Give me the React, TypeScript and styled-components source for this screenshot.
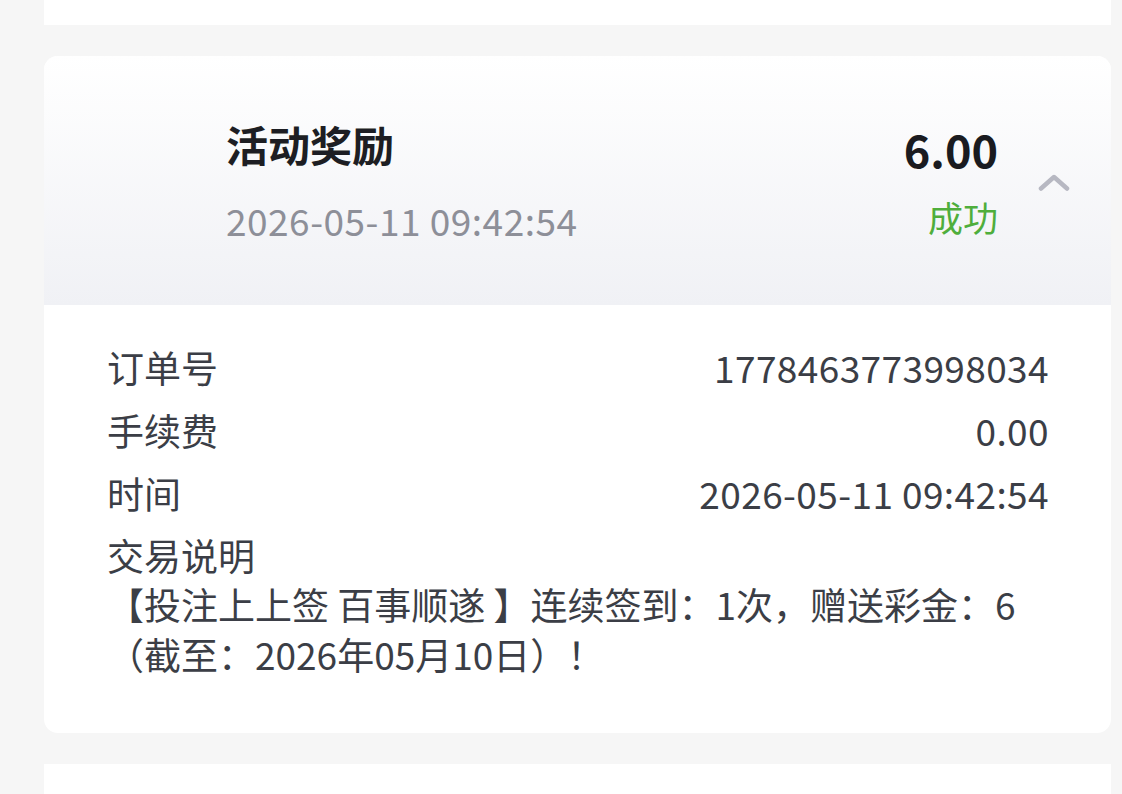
import styled, { createGlobalStyle } from 'styled-components';

const GlobalStyle = createGlobalStyle`
    html, body {
        margin: 0;
        padding: 0;
        background: #f6f6f6;
    }
    body {
        font-family: "Noto Sans CJK SC", "Noto Sans", sans-serif;
        -webkit-font-smoothing: antialiased;
    }
`;

type DetailRow = { label : string, value : string };

const rows : DetailRow[] = [
    { label: '订单号', value: '1778463773998034' },
    { label: '手续费', value: '0.00' },
    { label: '时间', value: '2026-05-11 09:42:54' },
];

const ChevronUp = () => (
    <svg width="32" height="18" viewBox="0 0 32 18" fill="none">
        <path d="M3 15.5 L16 4 L29 15.5" stroke="#b7b8c2" strokeWidth="4.5" strokeLinecap="round" strokeLinejoin="round" />
    </svg>
);

export default function App() {
    return (
        <Page>
            <GlobalStyle />
            <PrevCard />
            <Card>
                <Header>
                    <TitleBlock>
                        <Title>活动奖励</Title>
                        <Stamp>2026-05-11 09:42:54</Stamp>
                    </TitleBlock>
                    <AmountBlock>
                        <Amount>6.00</Amount>
                        <Status>成功</Status>
                    </AmountBlock>
                    <Toggle>
                        <ChevronUp />
                    </Toggle>
                </Header>
                <Details>
                    {rows.map(r => (
                        <Row key={r.label}>
                            <span>{r.label}</span>
                            <Value>{r.value}</Value>
                        </Row>
                    ))}
                    <NoteLabel>交易说明</NoteLabel>
                    <Note>
                        【投注上上签 百事顺遂 】连续签到：1次，赠送彩金：6（截至：2026年05月10日）！
                    </Note>
                </Details>
            </Card>
            <NextCard />
        </Page>
    );
}

const Page = styled.div`
    display: flex;
    flex-direction: column;
    gap: 31px;
    padding: 0 11px 0 44px;
    height: 794px;
    overflow: hidden;
    box-sizing: border-box;
`;

const PrevCard = styled.div`
    flex: 0 0 25px;
    background: #ffffff;
`;

const NextCard = styled.div`
    flex: 0 0 60px;
    background: #ffffff;
`;

const Card = styled.div`
    flex: 0 0 auto;
    background: #ffffff;
    border-radius: 14px;
    overflow: hidden;
`;

const Header = styled.div`
    display: flex;
    align-items: center;
    height: 249px;
    box-sizing: border-box;
    padding: 0 41px 0 182px;
    background: linear-gradient(180deg, #ffffff 0%, #f0f1f5 100%);
`;

const TitleBlock = styled.div`
    flex: 1 1 auto;
    display: flex;
    flex-direction: column;
    gap: 28px;
`;

const Title = styled.div`
    font-size: 42px;
    line-height: 50px;
    font-weight: 700;
    color: #1d1e23;
`;

const Stamp = styled.div`
    font-size: 37px;
    line-height: 46px;
    letter-spacing: 0.5px;
    color: #8d8f98;
`;

const AmountBlock = styled.div`
    display: flex;
    flex-direction: column;
    align-items: flex-end;
    gap: 19px;
    margin-top: 2px;
`;

const Amount = styled.div`
    font-size: 45px;
    line-height: 52px;
    font-weight: 700;
    color: #1a1b20;
`;

const Status = styled.div`
    font-size: 35px;
    line-height: 46px;
    color: #4fae3c;
`;

const Toggle = styled.div`
    display: flex;
    margin-left: 40px;
    margin-top: 2px;
`;

const Details = styled.div`
    padding: 37px 62px 54px 63px;
    display: flex;
    flex-direction: column;
    color: #3b3e46;
    font-size: 37px;
`;

const Row = styled.div`
    display: flex;
    justify-content: space-between;
    align-items: center;
    line-height: 50px;
    margin-bottom: 13px;
`;

const Value = styled.span`
    text-align: right;
    letter-spacing: 0.4px;
`;

const NoteLabel = styled.div`
    line-height: 48px;
`;

const Note = styled.div`
    line-height: 50px;
    padding-right: 30px;
`;
